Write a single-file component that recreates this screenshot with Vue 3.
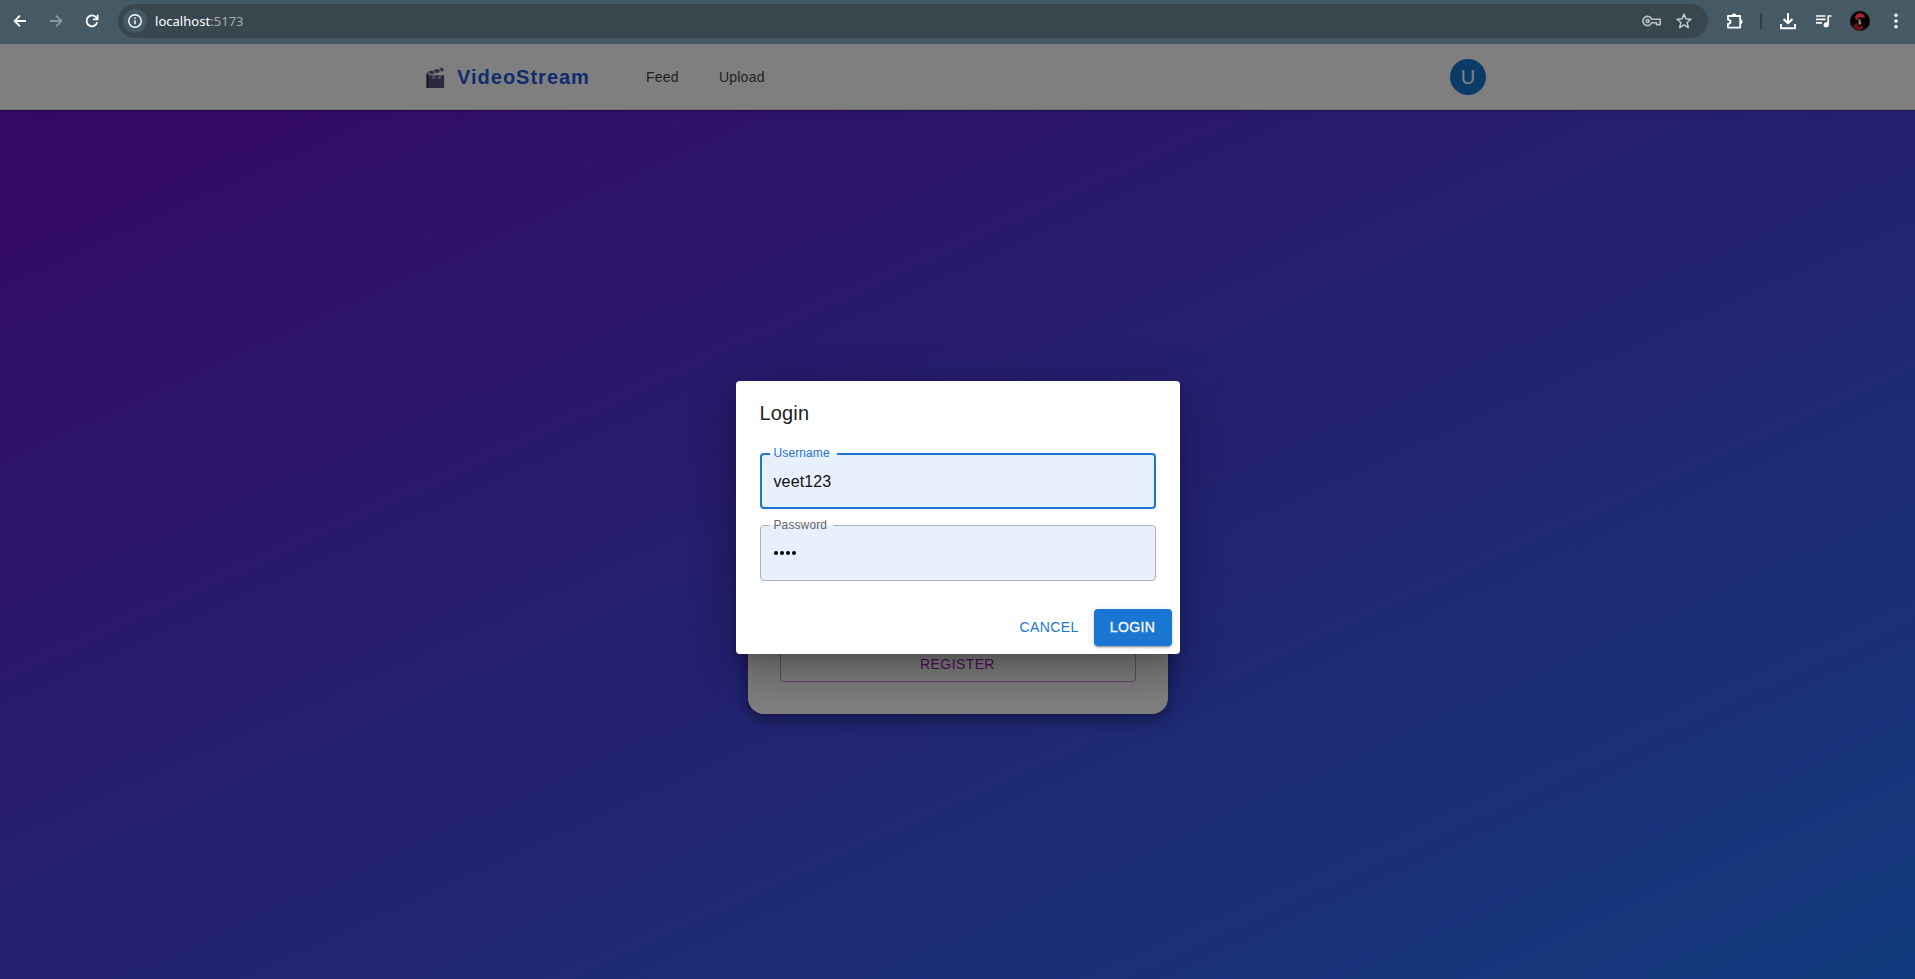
<script setup>
const links = ['Feed', 'Upload']
</script>

<template>
  <div class="window">
    <header class="chrome">
      <svg class="ic back" viewBox="0 0 16 16"><path d="M14 8H3M8 2.6 2.6 8 8 13.4" /></svg>
      <svg class="ic forward" viewBox="0 0 16 16"><path d="M2 8h11M8 2.6 13.4 8 8 13.4" /></svg>
      <svg class="ic reload" viewBox="0 0 16 16"><path d="M13.2 9.3A5.4 5.4 0 1 1 12.3 4.6L13.4 6" /><path d="M13.6 1.8v4.6H9" /></svg>
      <div class="address">
        <span class="info"><svg viewBox="0 0 16 16"><circle cx="8" cy="8" r="6.2" /><path d="M8 7.2v4M8 4.6v1.5" /></svg></span>
        <span class="url">localhost<i>:5173</i></span>
        <svg class="key" viewBox="0 0 20 14"><path d="M9.7 5.2H18.2V10.6H14.4V8.8H9.7A4.6 4.6 0 1 1 9.7 5.2Z" /><circle cx="5.6" cy="7" r="1.5" /></svg>
        <svg class="star" viewBox="0 0 16 16"><path d="M8 1.9 9.7 6l4.5.4-3.4 3 1 4.4L8 11.5l-3.8 2.3 1-4.4-3.4-3L6.3 6Z" /></svg>
      </div>
      <svg class="puzzle" viewBox="0 0 18 18"><path d="M2 4H14.2V15.6H2V11.9C5.4 11.6 5.4 7.9 2 7.6Z" /><path class="fill" d="M5.6 4a2.4 2.4 0 0 1 4.8 0zM14.2 7.4a2.4 2.4 0 0 1 0 4.8z" /></svg>
      <span class="divider"></span>
      <svg class="download" viewBox="0 0 18 18"><path d="M9 1v10M4.6 7 9 11.4 13.4 7M2 12v4.2h14V12" /></svg>
      <svg class="queue" viewBox="0 0 18 16"><path d="M1 3h9.5M1 6.4h9.5M1 9.8h6M13.2 12V3H16.5" /><circle cx="11.2" cy="11.8" r="2.6" /></svg>
      <svg class="profile" viewBox="0 0 20 20"><circle cx="10" cy="10" r="10" fill="#080405" /><path d="M5 7Q6 2 10 2.3T15 7L12.8 6.5 9 6.2 6.5 9Z" fill="#b51e32" /><path d="M3 16Q5 12 7 12L9 16 12 14 13 17 10 20 5 18Z" fill="#68101d" /><path d="M8.6 8 11 9 10.8 13 9.3 14 8.5 11Z" fill="#b5a28c" /><path d="M9.5 9h1v2h-1z" fill="#241515" /></svg>
      <svg class="dots" viewBox="0 0 4 16"><circle cx="2" cy="2.3" r="1.8" /><circle cx="2" cy="8" r="1.8" /><circle cx="2" cy="13.7" r="1.8" /></svg>
    </header>

    <main class="page">
      <nav class="navbar">
        <div class="nav-inner">
          <svg class="clapper" viewBox="0 0 18 20">
            <path d="M.5 4.8 16.2.5 17 3.7 1.2 8Z" fill="#c0b3d4" />
            <path d="m3 4.1 2.7-.8 2.1 2.9-2.8.8zM8 2.8l2.7-.8 2.2 2.8-2.8.8zM13 1.4l2.5-.7 1.5 3-1.7.4z" fill="#625080" />
            <path d="M.5 8h16.7v12H.5z" fill="#5a5080" />
            <path d="M2 8h15v3.2H2z" fill="#b4aac8" />
            <path d="m4 8h2.8L5.3 11.2H2zM9.5 8h2.8l-1.5 3.2H8zM15 8h2v3.2h-3.5z" fill="#594a78" />
            <path d="M.5 6.5h2V20h-2z" fill="#342b4c" />
          </svg>
          <span class="brand">VideoStream</span>
          <a v-for="link in links" :key="link" class="link">{{ link }}</a>
          <span class="avatar">U</span>
        </div>
      </nav>
      <section class="hero">
        <div class="card"><button class="register">REGISTER</button></div>
      </section>

      <div class="backdrop">
        <form class="dialog" @submit.prevent>
          <h2>Login</h2>
          <div class="fields">
            <div class="field focused"><label>Username</label><span>veet123</span></div>
            <div class="field"><label>Password</label><span class="bullets"><b v-for="n in 4" :key="n"></b></span></div>
          </div>
          <div class="actions">
            <button class="cancel">CANCEL</button>
            <button class="submit">LOGIN</button>
          </div>
        </form>
      </div>
    </main>
  </div>
</template>

<style>
body { margin: 0; overflow: hidden; }
</style>

<style scoped>
* { box-sizing: border-box; }
.window { width: 100vw; height: 100vh; display: flex; flex-direction: column; font-family: "Liberation Sans", Arial, sans-serif; }
button { font-family: inherit; padding: 0; background: none; border: 0; }
svg { display: block; flex: none; fill: none; stroke-linejoin: round; }
.chrome { height: 44px; flex: none; background: #455a64; display: flex; align-items: center; padding: 0 0 2px 12px; }
.ic { width: 16px; height: 16px; stroke: #fff; stroke-width: 1.8; }
.forward { margin-left: 20px; stroke: #8b979d; }
.reload { margin-left: 20px; }
.address { width: 1590px; height: 34px; margin-left: 18px; border-radius: 17px; background: #38464d; display: flex; align-items: center; padding: 0 15px 0 5px; }
.info { width: 24px; height: 24px; border-radius: 50%; background: #455a64; display: grid; place-items: center; }
.info svg { width: 16px; height: 16px; stroke: #fff; stroke-width: 1.4; }
.url { margin-left: 8px; font: 13px/20px "Noto Sans", sans-serif; letter-spacing: .03px; color: #fff; flex: 1; }
.url i { font-style: normal; color: #a4adb2; }
.key { width: 20px; height: 14px; stroke: #bcc3c7; stroke-width: 1.6; margin-right: 13px; }
.star { width: 18px; height: 18px; stroke: #c6cdd1; stroke-width: 1.3; }
.puzzle { width: 18px; height: 18px; margin-left: 18px; stroke: #fff; stroke-width: 1.8; }
.puzzle .fill { fill: #fff; stroke: none; }
.divider { width: 2px; height: 16px; margin-left: 16px; background: #2f3f47; }
.download { width: 18px; height: 18px; margin-left: 17px; stroke: #fff; stroke-width: 2; }
.queue { width: 18px; height: 16px; margin-left: 18px; stroke: #fff; stroke-width: 1.7; }
.queue circle { fill: #fff; stroke: none; }
.profile { width: 20px; height: 20px; margin-left: 17px; }
.dots { width: 4px; height: 16px; margin-left: 24px; fill: #fff; }
.page { position: relative; flex: 1; display: flex; flex-direction: column; }
.navbar { height: 66px; background: #fff; border-bottom: 1px solid #e3e3e3; box-shadow: 0 1px 3px rgba(0,0,0,.3); position: relative; z-index: 1; }
.nav-inner { width: 1060px; height: 66px; margin-left: 426px; display: flex; align-items: center; }
.clapper { width: 19px; height: 21px; }
.brand { margin-left: 12px; width: 189px; font-size: 20px; line-height: 24px; font-weight: 700; letter-spacing: 1px; color: #2056df; }
.link { font-size: 14px; line-height: 20px; letter-spacing: .24px; color: #444; margin-right: 40px; }
.avatar { width: 36px; height: 36px; margin-left: auto; border-radius: 50%; background: #1976d2; color: #fff; font-size: 20px; line-height: 36px; text-align: center; }
.hero { flex: 1; padding-top: 300px; background: linear-gradient(to bottom right, #6a11cb, #2575fc); }
.card { width: 420px; height: 304px; margin: 0 auto; padding: 32px; border-radius: 16px; background: #fff; box-shadow: 0 6px 16px rgba(0,0,0,.4); display: flex; align-items: flex-end; }
.register { width: 100%; height: 37px; border: 1px solid rgba(156,39,176,.5); border-radius: 4px; color: #9c27b0; font-size: 14px; letter-spacing: .4px; }
.backdrop { position: absolute; inset: 0; z-index: 2; background: rgba(0,0,0,.5); padding-top: 337px; }
.dialog { width: 444px; height: 273px; margin: 0 auto; background: #fff; border-radius: 4px; box-shadow: 0 11px 15px -7px rgba(0,0,0,.2), 0 24px 38px 3px rgba(0,0,0,.14), 0 9px 46px 8px rgba(0,0,0,.12); }
h2 { margin: 0; padding: 16px 24px; font-size: 20px; font-weight: 400; line-height: 32px; letter-spacing: .15px; color: #222; }
.fields { padding: 8px 24px 20px; display: grid; gap: 16px; }
.field { position: relative; height: 56px; border: 1px solid #abb1bd; border-radius: 4px; background: #e8effd; padding: 15px 13px; font-size: 16px; line-height: 24px; color: #111; }
.field.focused { border: 2px solid #1976d2; padding: 15px 12px 13px; letter-spacing: .12px; }
label { position: absolute; left: 8px; top: -9px; padding: 0 6px 0 5px; font-size: 12px; line-height: 17px; letter-spacing: .11px; color: #666; background: linear-gradient(#fff 8px, #e8effd 8px); }
.focused label { left: 8px; top: -10px; padding-left: 4px; padding-right: 7px; color: #1976d2; }
.bullets { display: flex; gap: 2px; padding: 10px 0 0; }
.bullets b { width: 4px; height: 4px; border-radius: 50%; background: #000; }
.actions { display: flex; justify-content: flex-end; padding: 8px; }
.cancel { width: 75px; margin-right: 7px; padding-bottom: 2px; color: #1976d2; font-size: 14px; letter-spacing: .4px; }
.submit { width: 78px; height: 37px; padding-bottom: 2px; border-radius: 4px; background: #1976d2; color: #fff; font-size: 14px; letter-spacing: .4px; -webkit-text-stroke: .3px #fff; box-shadow: 0 3px 1px -2px rgba(0,0,0,.2), 0 2px 2px rgba(0,0,0,.14), 0 1px 5px rgba(0,0,0,.12); }
</style>
